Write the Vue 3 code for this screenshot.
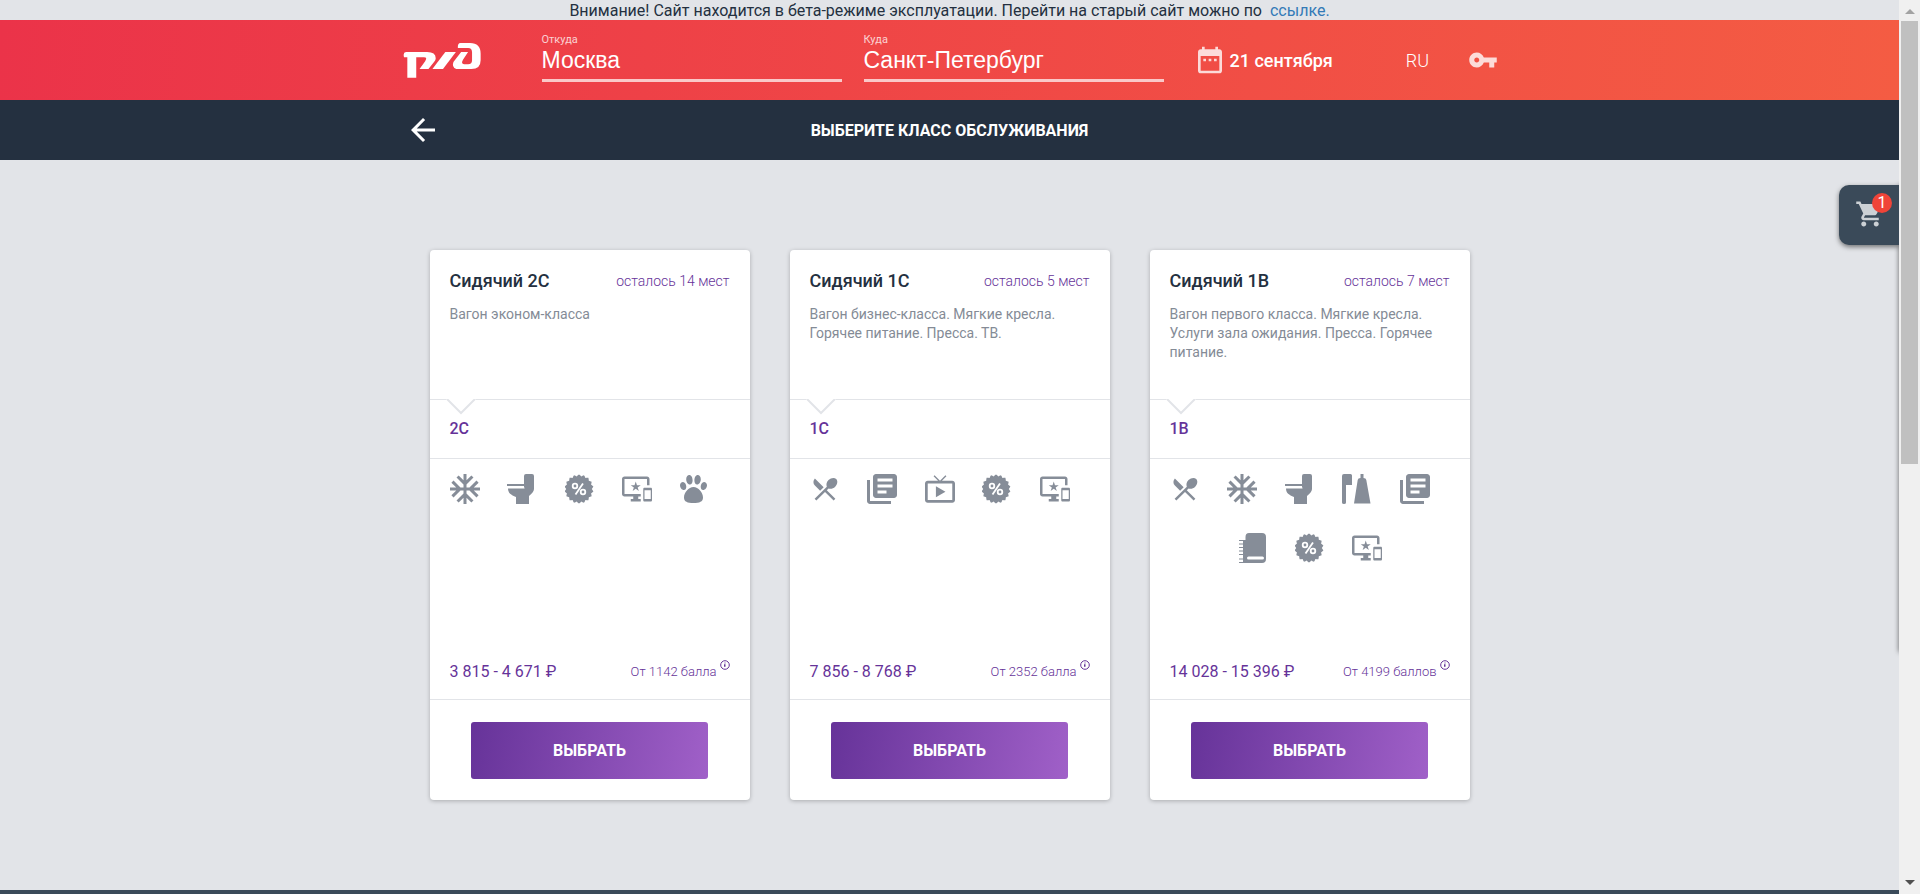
<script setup>
import { ref } from 'vue'

const from = ref('Москва')
const to = ref('Санкт-Петербург')

// Scalloped outline of the discount badge
const badge = Array.from({ length: 72 }, (_, i) => {
  const a = (i / 72) * Math.PI * 2
  const r = 13.7 + 0.9 * Math.cos(a * 18)
  return `${(15 + r * Math.sin(a)).toFixed(2)},${(15 - r * Math.cos(a)).toFixed(2)}`
}).join(' ')

const icons = {
  food: { box: '0 0 24 24', label: 'Питание', d: 'M8.1 13.34l2.83-2.83L3.91 3.5c-1.56 1.56-1.56 4.09 0 5.66l4.19 4.18zm6.78-1.81c1.53.71 3.68.21 5.27-1.38 1.91-1.91 2.28-4.65.81-6.12-1.46-1.46-4.2-1.1-6.12.81-1.59 1.59-2.09 3.74-1.38 5.27L3.7 19.87l1.41 1.41L12 14.41l6.88 6.88 1.41-1.41L13.41 13l1.47-1.47z' },
  climate: { box: '2 2 20 20', label: 'Кондиционер', d: 'M22 11h-4.17l3.24-3.24-1.41-1.42L15 11h-2V9l4.66-4.66-1.42-1.41L13 6.17V2h-2v4.17L7.76 2.93 6.34 4.34 11 9v2H9L4.34 6.34 2.93 7.76 6.17 11H2v2h4.17l-3.24 3.24 1.41 1.42L9 13h2v2l-4.66 4.66 1.42 1.41L11 17.83V22h2v-4.17l3.24 3.24 1.42-1.41L13 15v-2h2l4.66 4.66 1.41-1.42L17.83 13H22z' },
  toilet: { box: '0 0 30 30', label: 'Биотуалет', d: 'M0 10h17V2q0-2 2-2h6q2 0 2 2v13q0 3-5 7v8H9v-7C4 21 1 19 1 14.5h16.5v-1H17V12H0z' },
  hygiene: { box: '0 0 30 30', label: 'Гигиенический набор', d: 'M2 0h6.500q1.500 0 1.500 1.500v9.500H4v17.500q0 1.500-2 1.500t-2-1.500V2q0-2 2-2zM18.500 0h3v4q2.500 0 2.800 2L28.500 29.500H12L15.700 6q.3-2 2.800-2z' },
  press: { box: '2 2 20 20', label: 'Пресса', d: 'M4 6H2v14c0 1.100.9 2 2 2h14v-2H4V6zm16-4H8c-1.100 0-2 .9-2 2v12c0 1.100.9 2 2 2h12c1.100 0 2-.9 2-2V4c0-1.100-.9-2-2-2zm-1 9H9V9h10v2zm-4 4H9v-2h6v2zm4-8H9V5h10v2z' },
  tv: { box: '1 1 22 22', label: 'ТВ', d: 'M21 6h-7.590l3.290-3.290L16 2l-4 4-4-4-.71.71L10.590 6H3c-1.100 0-2 .89-2 2v12c0 1.100.9 2 2 2h18c1.100 0 2-.9 2-2V8c0-1.110-.9-2-2-2zm0 14H3V8h18v12zM9 10v8l7-4z' },
  screens: { box: '0 0 24 24', label: 'Электронная регистрация', d: 'M23 11.010L18 11c-.55 0-1 .45-1 1v9c0 .55.45 1 1 1h5c.55 0 1-.45 1-1v-9c0-.55-.45-.99-1-.99zM23 20h-5v-7h5v7zM20 2H2C.89 2 0 2.890 0 4v12c0 1.100.89 2 2 2h7v2H7v2h8v-2h-2v-2h2v-2H2V4h18v5h2V4c0-1.110-.9-2-2-2zm-8.030 7L11 6l-.97 3H7l2.470 1.760-.94 2.910 2.470-1.800 2.470 1.800-.94-2.910L15 9h-3.030z' },
  pets: { box: '0 0 30 30', label: 'Можно с животными', d: 'M3 8c1.800 0 3.300 2.300 3.300 4.700 0 2-1 3.300-2.400 3.300C1.800 16 0 13.500 0 11.200 0 9.300 1.300 8 3 8zM9.300 1c1.900 0 3.300 2.500 3.300 5.200 0 2.400-.9 4.300-2.700 4.300-2.100 0-3.700-2.600-3.700-5.300C6.200 2.800 7.500 1 9.300 1zM17.700 1c1.800 0 3.100 1.800 3.100 4.200 0 2.700-1.600 5.300-3.700 5.300-1.800 0-2.700-1.900-2.700-4.300 0-2.700 1.400-5.200 3.300-5.200zM24 8c1.700 0 3 1.300 3 3.200 0 2.300-1.800 4.800-3.900 4.800-1.400 0-2.400-1.300-2.400-3.300C20.700 10.300 22.200 8 24 8zM13.500 13c4.800 0 9.500 5.500 9.500 10.500 0 4.300-3.500 5.500-9.500 5.500S4 27.800 4 23.500C4 18.500 8.700 13 13.500 13z' },
  linen: { box: '0 0 30 30', label: 'Дорожный набор', d: 'M11 0h13q4 0 4 4v22q0 4-4 4H1v-1h4v-2.500H1v-1h4V22H1v-1h4v-2.500H1v-1h4V15H1v-1h4v-2.500H1v-1h4V8H1V7h6.500V4q0-4 3.500-4zM10.500 23.500q-1.500 0-1.500 1.500t1.500 1.500h14q1.500 0 1.500-1.500t-1.500-1.500z' },
}

const cars = [
  { code: '2С', left: 'осталось 14 мест', about: 'Вагон эконом-класса', price: '3 815 - 4 671 ₽', points: 'От 1142 балла',
    rows: [['climate', 'toilet', 'discount', 'screens', 'pets']] },
  { code: '1С', left: 'осталось 5 мест', about: 'Вагон бизнес-класса. Мягкие кресла. Горячее питание. Пресса. ТВ.', price: '7 856 - 8 768 ₽', points: 'От 2352 балла',
    rows: [['food', 'press', 'tv', 'discount', 'screens']] },
  { code: '1В', left: 'осталось 7 мест', about: 'Вагон первого класса. Мягкие кресла. Услуги зала ожидания. Пресса. Горячее питание.', price: '14 028 - 15 396 ₽', points: 'От 4199 баллов',
    rows: [['food', 'climate', 'toilet', 'hygiene', 'press'], ['linen', 'discount', 'screens']] },
]
</script>

<template>
  <div class="window">
    <div class="page">
      <p class="notice">Внимание! Сайт находится в бета-режиме эксплуатации. Перейти на старый сайт можно по <a href="#">ссылке.</a></p>

      <header class="header">
        <div class="container header-row">
          <a class="logo" href="#" aria-label="РЖД">
            <svg viewBox="0 0 234 106" width="78" height="35" fill="#fff">
              <path d="M8 27H72Q98 27 98 46Q98 51 94 56L76 79H49L66 55Q74 43 62 43H39V105H12V43H2Q-2 28 8 27Z" />
              <path d="M127 27H159L120 79H88Z" />
              <path d="M173 0H202Q234 0 234 32V52Q234 79 206 79H169Q149 79 150 64Q151 56 158 49L175 27H196L181 50Q173 63 184 64H196Q208 64 208 52V28Q208 15 196 15H165Q164 0 173 0Z" />
            </svg>
          </a>
          <div class="route">
            <label class="field"><span>Откуда</span><input v-model="from" type="text" /></label>
            <label class="field"><span>Куда</span><input v-model="to" type="text" /></label>
          </div>
          <button class="date" type="button">
            <svg viewBox="0 0 24 24" width="32" height="32"><path d="M9 11H7v2h2v-2zm4 0h-2v2h2v-2zm4 0h-2v2h2v-2zm2-7h-1V2h-2v2H8V2H6v2H5c-1.110 0-1.990.9-1.990 2L3 20c0 1.100.89 2 2 2h14c1.100 0 2-.9 2-2V6c0-1.100-.9-2-2-2zm0 16H5V9h14v11z" /></svg>
            <span>21 сентября</span>
          </button>
          <button class="lang" type="button">RU</button>
          <button class="login" type="button" aria-label="Войти">
            <svg viewBox="0 0 24 24" width="30" height="30"><path d="M12.650 10C11.830 7.670 9.610 6 7 6c-3.310 0-6 2.690-6 6s2.690 6 6 6c2.610 0 4.830-1.670 5.650-4H17v4h4v-4h2v-4H12.650zM7 14c-1.100 0-2-.9-2-2s.9-2 2-2 2 .9 2 2-.9 2-2 2z" /></svg>
          </button>
        </div>
      </header>

      <nav class="steps">
        <div class="container steps-row">
          <button class="back" type="button" aria-label="Назад">
            <svg viewBox="0 0 24 24" width="36" height="36"><path d="M20 11H7.830l5.590-5.590L12 4l-8 8 8 8 1.410-1.410L7.830 13H20v-2z" /></svg>
          </button>
          <h1>ВЫБЕРИТЕ КЛАСС ОБСЛУЖИВАНИЯ</h1>
        </div>
      </nav>

      <main class="cards">
        <article v-for="car in cars" :key="car.code" class="card">
          <section class="summary">
            <div class="summary-head">
              <h2>Сидячий {{ car.code }}</h2>
              <span>{{ car.left }}</span>
            </div>
            <p>{{ car.about }}</p>
          </section>
          <section class="code">
            <svg class="notch" viewBox="0 0 30 16" width="30" height="16"><path d="M0 0H30L15 15Z" fill="#fff" /><path d="M1 0L15 14L29 0" fill="none" stroke="#e2e4e8" stroke-width="2" /></svg>
            {{ car.code }}
          </section>
          <section class="details">
            <div class="amenities">
              <ul v-for="(row, n) in car.rows" :key="n" class="amenity-row">
                <li v-for="name in row" :key="name">
                  <svg v-if="name === 'discount'" viewBox="1 0 30 30" width="30" height="30" role="img" aria-label="Скидки">
                    <polygon :points="badge" />
                    <g fill="none" stroke="#fff" stroke-width="1.800"><circle cx="11" cy="12" r="2.300" /><circle cx="19" cy="18" r="2.300" /><path d="M19 9.500L11.500 20.500" /></g>
                  </svg>
                  <svg v-else :viewBox="icons[name].box" width="30" height="30" role="img" :aria-label="icons[name].label"><path fill-rule="evenodd" :d="icons[name].d" /></svg>
                </li>
              </ul>
            </div>
            <div class="cost">
              <span class="price">{{ car.price }}</span>
              <span class="points">{{ car.points }}
                <svg viewBox="0 0 10 10" width="10" height="10"><circle cx="5" cy="5" r="4.300" fill="none" stroke="currentColor" /><path d="M4.500 2.500h1v1h-1zM4 4.200h1.500v2.600h-1.500z" fill="currentColor" /></svg>
              </span>
            </div>
          </section>
          <footer class="action"><button type="button">ВЫБРАТЬ</button></footer>
        </article>
      </main>

      <footer class="page-footer"></footer>

      <div class="drawer-edge"></div>
      <button class="cart" type="button" aria-label="Корзина">
        <svg viewBox="0 0 24 24" width="30" height="30"><path d="M7 18c-1.100 0-1.990.9-1.990 2S5.900 22 7 22s2-.9 2-2-.9-2-2-2zM1 2v2h2l3.600 7.590-1.350 2.450c-.16.28-.25.61-.25.96 0 1.100.9 2 2 2h12v-2H7.420c-.14 0-.25-.11-.25-.25l.03-.12.9-1.630h7.450c.75 0 1.410-.41 1.750-1.030l3.580-6.490c.08-.14.12-.31.12-.48 0-.55-.45-1-1-1H5.210l-.94-2H1zm16 16c-1.100 0-1.990.9-1.990 2s.89 2 1.990 2 2-.9 2-2-.9-2-2-2z" /></svg>
        <span>1</span>
      </button>
    </div>

    <div class="scrollbar" aria-hidden="true">
      <svg viewBox="0 0 10 5" width="10" height="5"><path d="M0 5L5 0L10 5Z" fill="#a3a3a3" /></svg>
      <div class="track"><div class="thumb"></div></div>
      <svg viewBox="0 0 10 5" width="10" height="5"><path d="M0 0L5 5L10 0Z" fill="#505050" /></svg>
    </div>
  </div>
</template>

<style>
body { margin: 0; }
</style>

<style scoped>
* { box-sizing: border-box; }
.window { display: flex; min-height: 100vh; font-family: Roboto, "Liberation Sans", sans-serif; color: #243040; background: #e2e4e8; }
.page { position: relative; flex: 1; min-width: 0; display: flex; flex-direction: column; overflow: hidden; }
button { border: 0; padding: 0; background: none; font: inherit; color: inherit; cursor: pointer; }
svg { display: block; }
h1, h2, p, ul { margin: 0; padding: 0; }
ul { list-style: none; }
.container { width: 100%; max-width: 1140px; margin: 0 auto; }

.notice { padding-top: 2px; font-size: 16px; line-height: 18px; text-align: center; }
.notice a { margin-left: 4px; color: #337ab7; text-decoration: none; }

.header { background: linear-gradient(95deg, #eb3349, #f45c43); color: #fff; }
.header-row { display: flex; align-items: center; height: 80px; padding-left: 23px; }
.logo { margin-right: 61px; }
.route { display: flex; gap: 22px; }
.field { display: flex; flex-direction: column; width: 300px; height: 56px; padding-top: 1px; }
.field span { font-size: 11px; line-height: 14px; opacity: .75; }
.field input { width: 100%; height: 35px; padding: 0 0 6px; border: 0; border-bottom: 3px solid #fac8c8; outline: 0; background: none; color: #fff; font: 23px/26px "Liberation Sans", Arial, sans-serif; }
.date { display: flex; align-items: center; gap: 4px; margin-left: 30px; font-size: 18px; font-weight: 500; }
.date svg, .login svg { fill: #fff; opacity: .8; }
.lang { margin-left: 73px; font-size: 18px; font-weight: 300; }
.login { margin-left: 39px; }

.steps { background: #243040; color: #fff; }
.steps-row { position: relative; display: flex; align-items: center; height: 60px; }
.back { position: absolute; left: 25px; fill: #fff; }
h1 { flex: 1; text-align: center; font-size: 16px; font-weight: 700; }

.cards { display: flex; justify-content: center; gap: 40px; padding: 90px 20px; }
.card { display: flex; flex-direction: column; width: 320px; background: #fff; border-radius: 4px; box-shadow: 0 1px 4px rgba(0, 0, 0, .25); }
.summary { min-height: 150px; padding: 19px 20px 0; border-bottom: 1px solid #e2e4e8; }
.summary-head { display: flex; justify-content: space-between; align-items: center; line-height: 24px; color: #663399; font-size: 14px; }
.summary-head span { font-weight: 300; }
h2 { font-size: 18px; font-weight: 500; color: #243040; }
.summary p { margin-top: 12px; font-size: 14px; line-height: 19px; color: #848b96; }
.code { position: relative; padding: 19px 20px; border-bottom: 1px solid #e2e4e8; font-size: 16px; line-height: 20px; font-weight: 500; color: #663399; }
.notch { position: absolute; left: 16px; top: -1px; }
.details { flex: 1; display: flex; flex-direction: column; min-height: 241px; padding: 15px 20px; border-bottom: 1px solid #e2e4e8; }
.amenities { flex: 1; display: flex; flex-direction: column; align-items: center; gap: 29px; fill: #868d98; }
.amenity-row { display: flex; gap: 27px; }
.amenity-row:first-child { align-self: flex-start; gap: 0; width: 260px; justify-content: space-between; }
.cost { display: flex; justify-content: space-between; align-items: center; color: #663399; line-height: 24px; }
.price { font-size: 16px; }
.points { display: flex; gap: 3px; font-size: 13px; font-weight: 300; }
.action { display: flex; justify-content: center; padding: 22px 0 21px; }
.action button { width: 237px; height: 57px; border-radius: 3px; background: linear-gradient(100deg, #663399, #a060c8); color: #fff; font-size: 16px; font-weight: 700; }
.page-footer { flex: 1; min-height: 4px; background: #3a4a59; }

.cart { position: absolute; top: 185px; right: 0; display: flex; align-items: flex-start; width: 60px; height: 60px; padding: 14px 0 0 16px; border-radius: 10px 0 0 10px; background: #3a4a59; fill: #ccd1d5; box-shadow: 0 2px 5px rgba(0, 0, 0, .5); }
.cart span { position: absolute; top: 8px; right: 7px; width: 20px; height: 20px; border-radius: 50%; background: #f04438; color: #fff; font-size: 16px; line-height: 20px; text-align: center; }
.drawer-edge { position: absolute; top: 185px; left: 100%; width: 4px; height: 467px; box-shadow: 0 0 5px rgba(0, 0, 0, .6); }

.scrollbar { display: flex; flex-direction: column; align-items: center; gap: 7px; width: 21px; padding: 9px 0; background: #f0f0f0; }
.track { flex: 1; width: 17px; }
.thumb { height: 52%; background: #c0c0c0; }
</style>
